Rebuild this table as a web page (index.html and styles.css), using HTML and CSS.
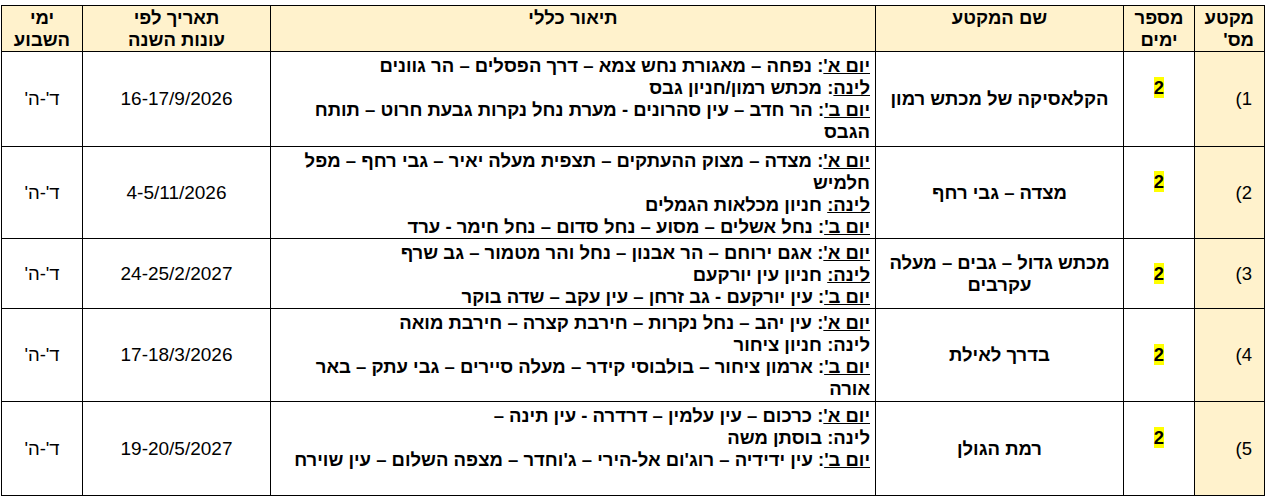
FILE: index.html
```html
<!DOCTYPE html>
<html lang="he">
<head>
<meta charset="utf-8">
<title>מקטעים</title>
<link rel="stylesheet" href="styles.css">
</head>
<body>
<table class="trips" dir="rtl">
  <colgroup>
    <col class="c-num">
    <col class="c-days">
    <col class="c-name">
    <col class="c-desc">
    <col class="c-date">
    <col class="c-week">
  </colgroup>
  <thead>
    <tr class="r-head">
      <th class="num">מקטע<br>מס'</th>
      <th>מספר<br>ימים</th>
      <th>שם המקטע</th>
      <th>תיאור כללי</th>
      <th>תאריך לפי<br>עונות השנה</th>
      <th>ימי<br>השבוע</th>
    </tr>
  </thead>
  <tbody>
    <tr class="r1">
      <td class="num">1)</td>
      <td class="days"><span class="hl">2</span><br>&nbsp;</td>
      <td class="name">הקלאסיקה של מכתש רמון</td>
      <td class="desc"><u>יום א'</u>: נפחה – מאגורת נחש צמא – דרך הפסלים – הר גוונים<br><u>לינה</u>: מכתש רמון/חניון גבס<br><u>יום ב'</u>: הר חדב – עין סהרונים - מערת נחל נקרות גבעת חרוט – תותח<br>הגבס</td>
      <td class="date">16-17/9/2026</td>
      <td class="week">ד'-ה'</td>
    </tr>
    <tr class="r2">
      <td class="num">2)</td>
      <td class="days"><span class="hl">2</span><br>&nbsp;</td>
      <td class="name">מצדה – גבי רחף</td>
      <td class="desc"><u>יום א'</u>: מצדה – מצוק ההעתקים – תצפית מעלה יאיר – גבי רחף – מפל<br>חלמיש<br><u>לינה:</u> חניון מכלאות הגמלים<br><u>יום ב'</u>: נחל אשלים – מסוע – נחל סדום – נחל חימר - ערד</td>
      <td class="date">4-5/11/2026</td>
      <td class="week">ד'-ה'</td>
    </tr>
    <tr class="r3">
      <td class="num">3)</td>
      <td class="days"><span class="hl">2</span></td>
      <td class="name">מכתש גדול – גבים – מעלה<br>עקרבים</td>
      <td class="desc"><u>יום א'</u>: אגם ירוחם – הר אבנון – נחל והר מטמור – גב שרף<br><u>לינה:</u> חניון עין יורקעם<br><u>יום ב'</u>: עין יורקעם - גב זרחן – עין עקב – שדה בוקר</td>
      <td class="date">24-25/2/2027</td>
      <td class="week">ד'-ה'</td>
    </tr>
    <tr class="r4">
      <td class="num">4)</td>
      <td class="days"><span class="hl">2</span></td>
      <td class="name">בדרך לאילת</td>
      <td class="desc"><u>יום א'</u>: עין יהב – נחל נקרות – חירבת קצרה – חירבת מואה<br>לינה: חניון ציחור<br><u>יום ב'</u>: ארמון ציחור – בולבוסי קידר – מעלה סיירים – גבי עתק – באר<br>אורה</td>
      <td class="date">17-18/3/2026</td>
      <td class="week">ד'-ה'</td>
    </tr>
    <tr class="r5">
      <td class="num">5)</td>
      <td class="days"><span class="hl">2</span><br>&nbsp;</td>
      <td class="name">רמת הגולן</td>
      <td class="desc"><u>יום א'</u>: כרכום – עין עלמין – דרדרה - עין תינה –<br>לינה: בוסתן משה<br><u>יום ב'</u>: עין ידידיה – רוג'ום אל-הירי – ג'וחדר – מצפה השלום – עין שוירח</td>
      <td class="date">19-20/5/2027</td>
      <td class="week">ד'-ה'</td>
    </tr>
  </tbody>
</table>
</body>
</html>
```

FILE: styles.css
```css
html, body {
  margin: 0;
  padding: 0;
  background: #ffffff;
}

body {
  padding: 5px 0 0 1px;
  font-family: "Liberation Sans", Arial, sans-serif;
  font-size: 18.5px;
  line-height: 22px;
  color: #000000;
}

.trips {
  border-collapse: collapse;
  table-layout: fixed;
  width: 1263px;
}

.c-num { width: 70px; }
.c-days { width: 71px; }
.c-name { width: 248px; }
.c-desc { width: 605px; }
.c-date { width: 188px; }
.c-week { width: 81px; }

.trips th,
.trips td {
  border: 1px solid #000000;
  padding: 0 5px;
  overflow: hidden;
}

.trips th {
  background: #fff2cc;
  font-weight: bold;
  text-align: center;
  vertical-align: top;
  padding-top: 1px;
}

.trips th.num {
  text-align: right;
  padding-right: 10px;
}

.trips td {
  vertical-align: middle;
  text-align: center;
}

.trips td.num {
  background: #fff2cc;
  text-align: right;
  padding-right: 12px;
  font-weight: normal;
}

.trips td.date {
  font-size: 19px;
}

.trips td.days,
.trips td.name,
.trips td.desc {
  font-weight: bold;
}

.trips td.desc {
  text-align: right;
  vertical-align: top;
  white-space: nowrap;
  padding: 3px 5px 0 2px;
}

.hl {
  background: #ffff00;
}

.r-head { height: 46px; }
.r1 { height: 95px; }
.r2 { height: 91px; }
.r3 { height: 69px; }
.r4 { height: 93px; }
.r5 { height: 94px; }
```
